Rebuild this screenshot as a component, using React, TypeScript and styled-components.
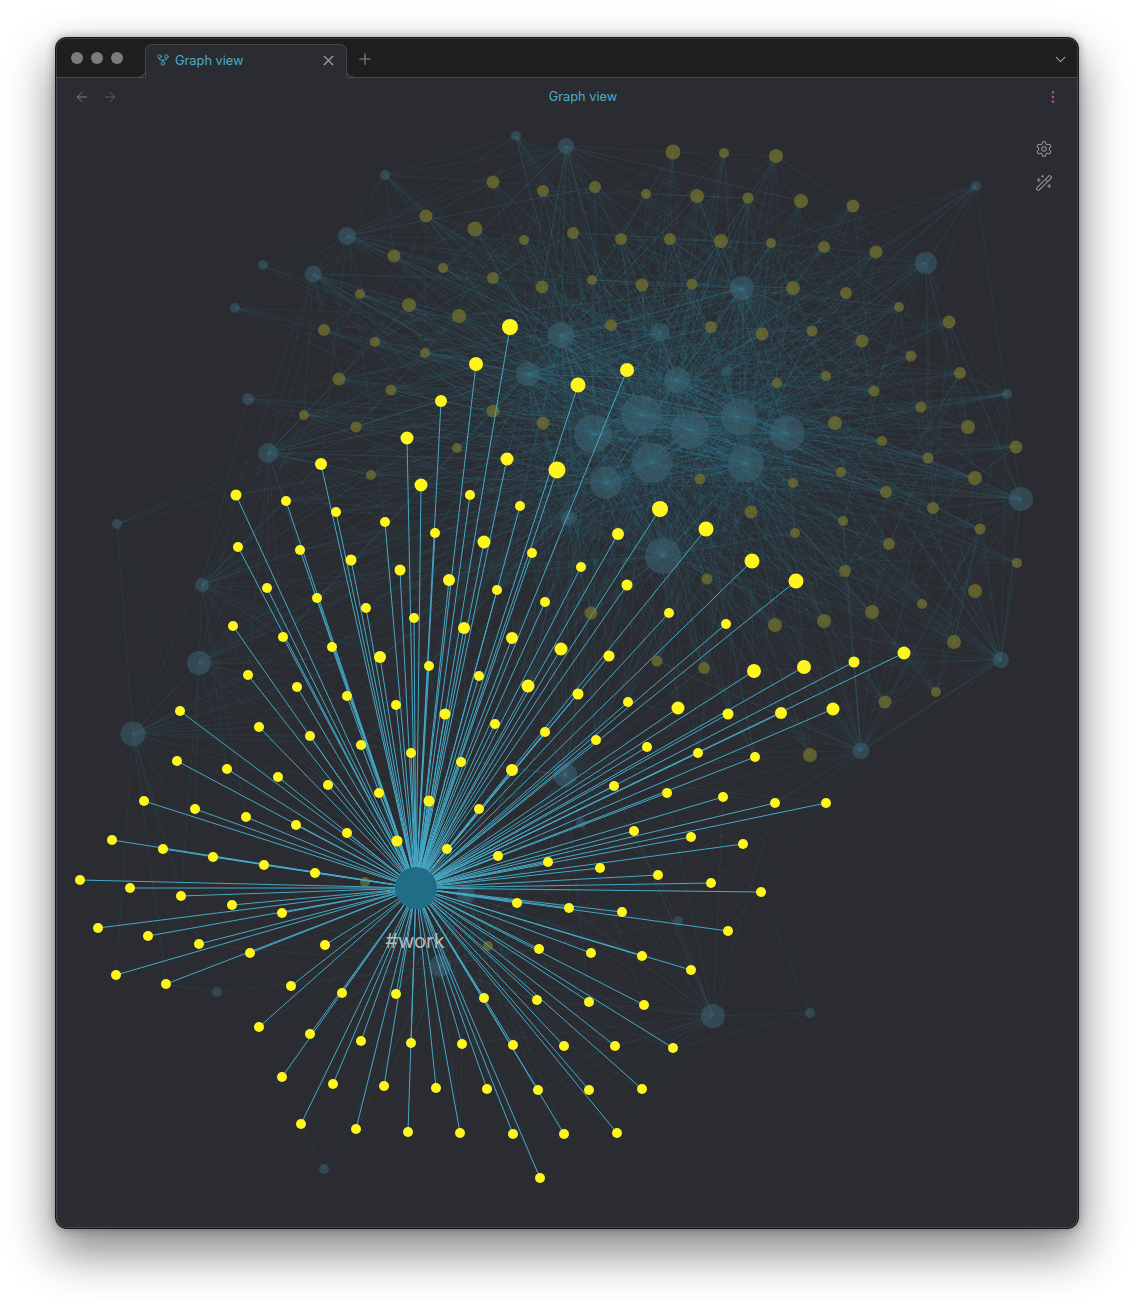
import React from "react";
import styled, { createGlobalStyle } from "styled-components";
import { GitFork, X, Plus, ChevronDown, ArrowLeft, ArrowRight, EllipsisVertical, Settings, WandSparkles } from "lucide-react";

type N = [number, number, number];

const HUB = { x: 416, y: 888, r: 21 };

const yellow: N[] = [
  [510,327,8],[476,364,7],[578,385,7.5],[627,370,7],[441,401,6],[407,438,6.5],[321,464,6],[507,459,6.5],[557,470,8.5],[421,485,6.5],
  [236,495,5.5],[286,501,5],[336,512,5],[385,522,5],[470,495,5],[520,506,5],[660,509,8],[706,529,7.5],[618,534,6],[435,533,5],
  [484,542,6.5],[532,553,5],[238,547,5],[300,550,5],[351,560,5.5],[400,570,5.5],[581,567,5],[752,561,7.5],[796,581,7.5],[267,588,5],
  [317,598,5],[449,580,6],[497,590,5],[545,602,5],[627,585,5.5],[366,608,5],[414,618,5],[669,613,5],[233,626,5],[283,637,5],
  [464,628,6],[512,638,6],[726,624,5],[332,647,5],[380,657,6],[561,649,6.5],[609,656,5.5],[904,653,6.5],[854,662,5.5],[804,667,7],
  [754,671,7],[248,675,5],[297,687,5],[429,666,5],[479,676,5],[528,686,6.5],[347,696,5],[396,705,5],[578,694,5.5],[628,702,5],
  [678,708,6.5],[833,709,6.5],[781,713,6],[728,714,5.5],[180,711,5],[445,714,5.5],[259,727,5],[310,736,5],[495,724,5],[545,732,5],
  [596,740,5],[361,745,5],[411,753,5],[461,762,5],[647,747,5],[698,753,5],[755,757,5],[177,761,5],[227,769,5],[278,777,5],
  [328,785,5],[512,770,6],[614,786,5],[667,793,5],[723,797,5],[379,793,5],[429,801,5.5],[144,801,5],[195,809,5],[246,817,5],
  [479,809,5],[775,803,5],[826,803,5],[296,825,5],[347,833,5],[634,831,5],[691,837,5],[112,840,5],[397,841,5.5],[163,849,5],
  [447,849,5],[743,844,5],[213,857,5],[498,856,5],[264,865,5],[548,862,5],[600,868,5],[315,873,5],[658,875,5],[711,883,5],
  [80,880,5],[130,888,5],[761,892,5],[181,896,5],[232,905,5],[517,903,5],[569,908,5],[622,912,5],[282,913,5],[98,928,5],
  [148,936,5],[728,931,5],[199,944,5],[325,945,5],[250,953,5],[539,949,5],[591,953,5],[642,956,5],[116,975,5],[166,984,5],
  [691,970,5],[291,986,5],[342,993,5],[396,994,5],[484,998,5],[537,1000,5],[589,1002,5],[644,1005,5],[259,1027,5],[310,1034,5],
  [361,1041,5],[411,1043,5],[462,1044,5],[513,1045,5],[564,1046,5],[615,1046,5],[673,1048,5],[282,1077,5],[333,1084,5],[384,1086,5],
  [436,1088,5],[487,1089,5],[538,1090,5],[589,1090,5],[642,1089,5],[301,1124,5],[356,1129,5],[408,1132,5],[460,1133,5],[513,1134,5],
  [564,1134,5],[617,1133,5],[540,1178,5],
];

const dimTeal: N[] = [
  [516,136,5],[566,146,8],[385,175,5],[347,236,9],[263,265,5],[313,274,8.5],[235,308,5],[248,399,6],[268,453,10],[117,524,5],
  [202,585,7],[199,663,12],[133,734,12.5],[926,263,11],[976,186,5],[742,288,12],[561,335,13],[660,332,9.5],[528,374,12],[677,380,13],
  [727,371,5.5],[593,434,19],[641,415,20],[690,430,19],[739,417,18],[787,433,17.5],[652,463,20],[746,464,18],[606,483,16],[1021,499,12],
  [1007,394,5],[1001,660,8],[861,751,8.5],[663,556,18],[569,518,8],[713,1016,12],[810,1013,5],[324,1169,5],[217,992,5],[678,921,5],
  [581,823,5],[565,775,12],[466,895,9],[440,966,11],
];

const dimYellow: N[] = [
  [673,152,7.5],[724,153,5],[776,156,7],[493,182,6.5],[543,191,6],[595,187,6],[646,194,5],[697,196,7],[748,198,5.5],[801,201,7],
  [853,206,6.5],[426,216,6.5],[475,229,7.5],[524,240,5],[573,233,6],[621,239,6],[670,239,6],[721,241,7],[771,243,5],[824,247,6],
  [876,252,6.5],[394,256,6.5],[443,268,5],[493,278,6],[592,280,5],[642,285,6.5],[692,284,5.5],[793,288,7],[846,293,6],[542,287,6.5],
  [360,294,5],[409,305,7],[459,316,7],[611,325,6],[711,327,6],[899,307,5],[949,322,6.5],[324,330,6],[375,342,5],[762,334,6.5],
  [812,331,5.5],[862,341,6.5],[425,353,5],[911,356,5.5],[339,379,6.5],[391,390,5.5],[777,383,5],[826,376,5],[960,373,6],[874,391,5.5],
  [493,411,6.5],[543,423,6.5],[304,415,5],[356,427,5.5],[835,423,7],[921,407,5.5],[968,427,7],[457,448,5],[882,441,5],[1016,447,6.5],
  [928,458,5.5],[371,475,5],[841,472,5],[700,479,5.5],[793,483,5],[975,478,7],[886,492,6],[933,508,6],[751,512,6.5],[843,521,5],
  [980,529,5.5],[795,533,5],[889,544,6],[1017,563,5],[845,571,6],[707,579,5.5],[975,591,7],[591,613,6.5],[872,612,7],[922,604,5],
  [824,621,7],[775,625,7],[954,642,7],[657,661,5.5],[704,668,6],[936,692,5],[885,702,6.5],[810,755,7],[365,882,5],[488,946,5],
];

function makeFaintEdges(): [number, number, number, number][] {
  let seed = 20240611;
  const rnd = () => {
    seed = (seed * 1664525 + 1013904223) >>> 0;
    return seed / 4294967296;
  };
  const out: [number, number, number, number][] = [];
  const bg = [...dimTeal, ...dimYellow];
  const dist = (a: N, b: N) => Math.hypot(a[0] - b[0], a[1] - b[1]);
  const core = dimTeal.filter((t) => t[2] >= 12 && t[1] < 600 && t[0] > 500 && t[0] < 900);
  // central teal clusters reach far over the upper-right cloud
  core.forEach((t) => {
    bg.forEach((b) => {
      if (b !== t && dist(t, b) < 470 && b[1] < 800 && rnd() < 0.6) out.push([t[0], t[1], b[0], b[1]]);
    });
    yellow.forEach((y) => {
      if (y[1] < 760 && dist(t, y) < 420 && rnd() < 0.3) out.push([t[0], t[1], y[0], y[1]]);
    });
  });
  // outer satellites fan out to what is close to them
  dimTeal.filter((t) => !core.includes(t) && t[2] >= 7).forEach((t) => {
    [...bg, ...yellow].forEach((b) => {
      const lower = t[1] > 650 || t[0] < 300;
      if (b === t || dist(t, b) > (lower ? 270 : 330)) return;
      if (lower && b[0] < t[0] - 20 && t[0] < 300) return;
      if (rnd() < (lower ? 0.55 : 0.24)) out.push([t[0], t[1], b[0], b[1]]);
    });
  });
  // the ordinary mesh of dim notes
  bg.forEach((a) => {
    for (let i = 0; i < 7; i++) {
      const b = bg[Math.floor(rnd() * bg.length)];
      if (b !== a && dist(a, b) < 260) out.push([a[0], a[1], b[0], b[1]]);
    }
  });
  // small outliers keep a thread to the graph
  ([[117,524,180,711],[117,524,268,453],[117,524,236,495],[810,1013,673,1048],[810,1013,761,892],[324,1169,301,1124],[217,992,166,984],[976,186,926,263],[385,175,347,236],[516,136,475,229]] as [number,number,number,number][]).forEach((e) => out.push(e));
  return out;
}

const faintEdges = makeFaintEdges();

const GlobalStyle = createGlobalStyle`
  html, body { margin: 0; padding: 0; background: #fff; }
  body { font-family: Inter, "Liberation Sans", sans-serif; }
`;

const Page = styled.div`
  width: 1134px;
  height: 1302px;
  padding: 37px 55px 73px;
  box-sizing: border-box;
  overflow: hidden;
  background: #fff;
`;

const WindowShell = styled.div`
  height: 100%;
  border-radius: 11px;
  box-shadow: 0 22px 46px 3px rgba(0, 0, 0, 0.46), 0 0 10px rgba(0, 0, 0, 0.32);
`;

const Window = styled.div`
  height: 100%;
  display: flex;
  flex-direction: column;
  box-sizing: border-box;
  border-radius: 11px;
  overflow: hidden;
  background: #2a2c31;
  border: 1px solid #151517;
  position: relative;
  &::after {
    content: "";
    position: absolute;
    inset: 0;
    border-radius: 10px;
    box-shadow: inset 0 0 0 1px rgba(255, 255, 255, 0.14);
    pointer-events: none;
    z-index: 3;
  }
`;

const TabBar = styled.div`
  height: 40px;
  flex: none;
  display: flex;
  align-items: flex-end;
  box-sizing: border-box;
  background: #1e1e1e;
  border-bottom: 1px solid #454649;
  position: relative;
`;

const Traffic = styled.div`
  display: flex;
  gap: 8px;
  width: 89px;
  height: 39px;
  padding: 14px 0 0 15px;
  box-sizing: border-box;
`;

const Dot = styled.span`
  width: 12px;
  height: 12px;
  border-radius: 50%;
  background: #7b7b7b;
`;

const Tab = styled.div`
  width: 202px;
  height: 34px;
  margin-bottom: -1px;
  box-sizing: border-box;
  display: flex;
  align-items: center;
  gap: 6px;
  padding: 0 9px 3px 10px;
  background: #2a2c31;
  border: 1px solid #454649;
  border-bottom: none;
  border-radius: 7px 7px 0 0;
  color: #48aecb;
  font-size: 12.8px;
  position: relative;
  &::before, &::after {
    content: "";
    position: absolute;
    bottom: 1px;
    width: 6px;
    height: 6px;
    border-bottom: 1px solid #454649;
  }
  &::before { left: -7px; border-right: 1px solid #454649; border-bottom-right-radius: 6px; }
  &::after { right: -7px; border-left: 1px solid #454649; border-bottom-left-radius: 6px; }
`;

const TabTitle = styled.span`
  flex: 1;
  margin-left: -1px;
`;

const TabIconButton = styled.span<{ $color: string }>`
  display: flex;
  color: ${(p) => p.$color};
`;

const NewTab = styled.span`
  display: flex;
  height: 39px;
  align-items: center;
  margin-left: 9px;
  padding-top: 3px;
  box-sizing: border-box;
  color: #8c8c8c;
`;

const TabEnd = styled.span`
  margin-left: auto;
  height: 39px;
  display: flex;
  align-items: center;
  padding: 3px 9px 0 0;
  box-sizing: border-box;
  color: #a0a0a0;
`;

const Pane = styled.div`
  flex: 1;
  position: relative;
  min-height: 0;
  overflow: hidden;
`;

const ViewHeader = styled.div`
  position: relative;
  z-index: 1;
  height: 38px;
  display: flex;
  align-items: center;
  padding: 0 17px 0 18px;
  box-sizing: border-box;
`;

const NavGroup = styled.div`
  display: flex;
  gap: 12px;
`;

const NavArrow = styled.span<{ $dim?: boolean }>`
  display: flex;
  color: ${(p) => (p.$dim ? "#5b5c60" : "#7e7f83")};
`;

const ViewTitle = styled.div`
  flex: 1;
  text-align: center;
  color: #48aecb;
  font-size: 12.8px;
  padding: 0 0 2px 3px;
`;

const More = styled.span`
  display: flex;
  color: #b0489e;
`;

const GraphCanvas = styled.svg`
  position: absolute;
  inset: 0;
  width: 100%;
  height: 100%;
  display: block;
`;

const GraphControls = styled.div`
  position: absolute;
  top: 62px;
  right: 25px;
  display: flex;
  flex-direction: column;
  gap: 16px;
  color: #94959a;
`;

const ControlIcon = styled.span`
  display: flex;
`;

const WorkLabel = styled.text`
  font-family: Inter, "Liberation Sans", sans-serif;
  font-size: 20px;
  fill: #b9babb;
  text-anchor: middle;
`;

export default function App() {
  return (
    <>
      <GlobalStyle />
      <Page>
        <WindowShell>
          <Window>
            <TabBar>
              <Traffic>
                <Dot />
                <Dot />
                <Dot />
              </Traffic>
              <Tab>
                <GitFork size={14} strokeWidth={1.6} />
                <TabTitle>Graph view</TabTitle>
                <TabIconButton $color="#a5a6a8">
                  <X size={17} strokeWidth={1.6} />
                </TabIconButton>
              </Tab>
              <NewTab>
                <Plus size={18} strokeWidth={1.5} />
              </NewTab>
              <TabEnd>
                <ChevronDown size={17} strokeWidth={1.5} />
              </TabEnd>
            </TabBar>
            <Pane>
              <GraphCanvas viewBox="56 78 1022 1150" preserveAspectRatio="xMinYMin slice">
                <g stroke="#3f9cb8" strokeOpacity={0.1} strokeWidth={1}>
                  {faintEdges.map((e, i) => (
                    <line key={i} x1={e[0]} y1={e[1]} x2={e[2]} y2={e[3]} />
                  ))}
                </g>
                <g fill="#3d6170" fillOpacity={0.55}>
                  {dimTeal.map((n, i) => (
                    <circle key={i} cx={n[0]} cy={n[1]} r={n[2]} />
                  ))}
                </g>
                <g fill="#6c6b30" fillOpacity={0.82}>
                  {dimYellow.map((n, i) => (
                    <circle key={i} cx={n[0]} cy={n[1]} r={n[2]} />
                  ))}
                </g>
                <g stroke="#46a9c6" strokeWidth={1}>
                  {yellow.map((n, i) => (
                    <line key={i} x1={HUB.x} y1={HUB.y} x2={n[0]} y2={n[1]} />
                  ))}
                </g>
                <g fill="#fff51e">
                  {yellow.map((n, i) => (
                    <circle key={i} cx={n[0]} cy={n[1]} r={n[2]} />
                  ))}
                </g>
                <circle cx={HUB.x} cy={HUB.y} r={HUB.r} fill="#1f6d86" />
                <WorkLabel x={415} y={948}>#work</WorkLabel>
              </GraphCanvas>
              <ViewHeader>
                <NavGroup>
                  <NavArrow><ArrowLeft size={16} strokeWidth={1.5} /></NavArrow>
                  <NavArrow $dim><ArrowRight size={16} strokeWidth={1.5} /></NavArrow>
                </NavGroup>
                <ViewTitle>Graph view</ViewTitle>
                <More><EllipsisVertical size={16} strokeWidth={2} /></More>
              </ViewHeader>
              <GraphControls>
                <ControlIcon><Settings size={18} strokeWidth={1.4} /></ControlIcon>
                <ControlIcon><WandSparkles size={18} strokeWidth={1.4} /></ControlIcon>
              </GraphControls>
            </Pane>
          </Window>
        </WindowShell>
      </Page>
    </>
  );
}
